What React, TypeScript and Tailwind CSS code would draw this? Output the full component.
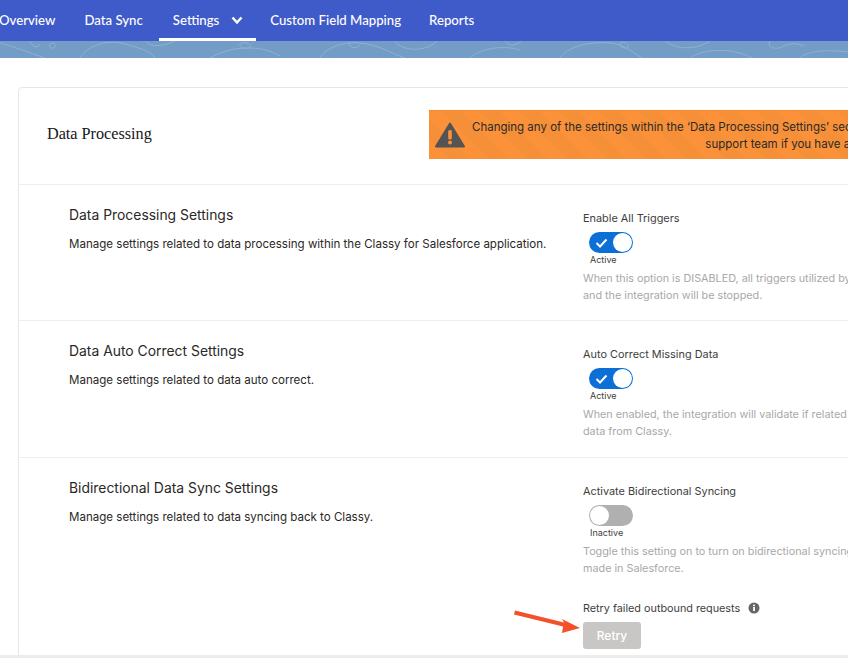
import React from 'react';

function Toggle({ on, label }: { on: boolean; label: string }) {
  return (
    <div className="mt-[7px] mb-[4px]">
      {on ? (
        <div className="ml-[6px] flex h-[21px] w-[44px] items-center justify-between rounded-full bg-[#0b6fd6] pl-[6px] pr-[1px]">
          <svg width="13" height="10" viewBox="0 0 13 10" fill="none">
            <path d="M1.5 5l3.5 3.5L11.5 1.5" stroke="#fff" strokeWidth="2" />
          </svg>
          <span className="h-[19px] w-[19px] rounded-full bg-white" />
        </div>
      ) : (
        <div className="ml-[6px] flex h-[21px] w-[44px] items-center rounded-full bg-[#b0b0b0] pl-[1px]">
          <span className="h-[19px] w-[19px] rounded-full bg-white" />
        </div>
      )}
      <div className="ml-[7px] mt-[1px] text-[9px] leading-[12px] text-[#3e3e3c]">{label}</div>
    </div>
  );
}

function SettingRow({
  title,
  desc,
  field,
  on,
  help,
  className,
  children,
}: {
  title: string;
  desc: string;
  field: string;
  on: boolean;
  help: string[];
  className: string;
  children?: React.ReactNode;
}) {
  return (
    <div className={`flex border-t border-[#eeeeee] pl-[50px] ${className}`}>
      <div className="w-[514px] shrink-0 pt-[20px]">
        <h3 className="text-[13.9px] leading-[20px] text-[#2b2826]">{title}</h3>
        <p className="mt-[11px] text-[11.55px] leading-[16px] text-[#2b2826]">{desc}</p>
      </div>
      <div className="pt-[26px]">
        <div className="text-[10.9px] leading-[14px] text-[#3e3e3c]">{field}</div>
        <Toggle on={on} label={on ? 'Active' : 'Inactive'} />
        <div className="whitespace-nowrap text-[10.8px] leading-[17px] text-[#a8a8a8]">
          {help.map((line) => (
            <div key={line}>{line}</div>
          ))}
        </div>
        {children}
      </div>
    </div>
  );
}

export default function App() {
  return (
    <div className="flex h-[658px] w-[848px] flex-col overflow-hidden bg-white font-['Inter',sans-serif]">
      <nav className="flex h-[41px] shrink-0 items-stretch bg-[#3f5bc9] font-['Lato',sans-serif] text-[13.2px] font-medium text-white">
        <div className="-ml-[1px] flex items-center pr-[29px]">Overview</div>
        <div className="flex items-center pr-[16px]">Data Sync</div>
        <div className="flex items-center gap-[12px] border-b-[3px] border-white pl-[14px] pr-[13px] pt-[3px]">
          Settings
          <svg width="12" height="9" viewBox="0 0 12 9" fill="none">
            <path d="M1.5 1.5L6 6.5l4.5-5" stroke="#fff" strokeWidth="2.4" />
          </svg>
        </div>
        <div className="flex items-center px-[14px]">Custom Field Mapping</div>
        <div className="flex items-center px-[14px]">Reports</div>
      </nav>

      <div className="h-[17px] shrink-0 bg-[#739dc6]">
        <svg width="848" height="17" viewBox="0 0 848 17" fill="none" stroke="#8fb1d3" strokeWidth="1">
          <path d="M0 2c15 4 30 10 45 15M30 0c2 6 8 8 10 3M50 3c3-2 7 0 5 3s-7 0-5-3M80 17c5-10 25-20 45-14 10 3 25 6 30 14M145 0c8 8 20 4 30 0M210 17c20-12 50-14 70-2M240 3c6-3 12 0 10 3s-12 1-10-3" />
          <path d="M320 17c4-8 20-17 40-15s30 10 45 15M350 1c-3 5 6 8 10 3M395 0c6 10 30 12 42 0M470 17c8-8 30-14 50-8M505 0c4 5 10 6 16 0" />
          <path d="M560 17c6-10 26-17 50-15 14 1 20 8 32 15M620 2c4-2 10 1 8 4s-10 0-8-4M665 0c10 8 30 10 45 0M690 17c10-8 40-12 62 0M770 0c-4 6 6 10 14 5 6-3 14-3 20 0M800 17c6-6 20-9 48-6" />
        </svg>
      </div>

      <main className="min-h-0 flex-1 overflow-hidden px-[18px] pt-[29px]">
        <div className="w-[1100px] rounded-t-[4px] border border-[#e6e6e6]">
          <header className="flex h-[96px] items-center">
            <h2 className="w-[410px] shrink-0 pb-[3px] pl-[28px] font-['Liberation_Serif',serif] text-[16.2px] text-[#16151a]">
              Data Processing
            </h2>
            <div className="mb-[4px] flex h-[49px] w-[660px] shrink-0 items-center border-t border-[#f58a23] bg-[#fb9239] bg-[repeating-linear-gradient(45deg,#fb9239_0px,#fb9239_14px,#f58f38_14px,#f58f38_28px)]">
              <svg className="ml-[6px] shrink-0" width="30" height="26" viewBox="0 0 30 26">
                <path d="M15 1.5L1 24.5h28z" fill="#545454" stroke="#545454" strokeWidth="2" strokeLinejoin="round" />
                <rect x="13.2" y="8" width="3.6" height="9.5" rx="1.5" fill="#fb9239" />
                <circle cx="15" cy="20.5" r="1.9" fill="#fb9239" />
              </svg>
              <p className="ml-[6px] w-[691px] shrink-0 pt-[2px] text-center text-[11.5px] leading-[17px] whitespace-nowrap text-[#2a2a2a]">
                Changing any of the settings within the ‘Data Processing Settings’ section may impact your data integration.
                Please contact the
                <br />
                <span className="pr-[5px]">support team if you have any questions.</span>
              </p>
            </div>
          </header>

          <SettingRow
            className="h-[136px]"
            title="Data Processing Settings"
            desc="Manage settings related to data processing within the Classy for Salesforce application."
            field="Enable All Triggers"
            on
            help={['When this option is DISABLED, all triggers utilized by the application will be disabled', 'and the integration will be stopped.']}
          />
          <SettingRow
            className="h-[137px]"
            title="Data Auto Correct Settings"
            desc="Manage settings related to data auto correct."
            field="Auto Correct Missing Data"
            on
            help={['When enabled, the integration will validate if related records exist and retrieve missing', 'data from Classy.']}
          />
          <SettingRow
            className="h-[200px]"
            title="Bidirectional Data Sync Settings"
            desc="Manage settings related to data syncing back to Classy."
            field="Activate Bidirectional Syncing"
            on={false}
            help={['Toggle this setting on to turn on bidirectional syncing of changes', 'made in Salesforce.']}
          >
            <div className="relative mt-[25px]">
              <div className="flex items-center gap-[8px] text-[10.8px] leading-[14px] text-[#3e3e3c]">
                Retry failed outbound requests
                <svg className="mb-[2px]" width="12" height="12" viewBox="0 0 12 12">
                  <circle cx="6" cy="6" r="5.5" fill="#666" />
                  <rect x="5.1" y="5" width="1.8" height="4" fill="#fff" />
                  <rect x="5.1" y="2.6" width="1.8" height="1.6" fill="#fff" />
                </svg>
              </div>
              <button className="mt-[6px] h-[27px] w-[58px] rounded-[3px] bg-[#c9c7c5] text-[12px] font-medium text-white">
                Retry
              </button>
              <svg className="absolute left-[-69px] top-[8px]" width="66" height="24" viewBox="0 0 66 24">
                <path d="M1 .5L50 12.5 48 9l18 9-18 5 1-6.5L0 4.5z" fill="#f4502a" />
              </svg>
            </div>
          </SettingRow>
        </div>
      </main>
      <div className="h-[3px] shrink-0 bg-[#ececec]" />
    </div>
  );
}
